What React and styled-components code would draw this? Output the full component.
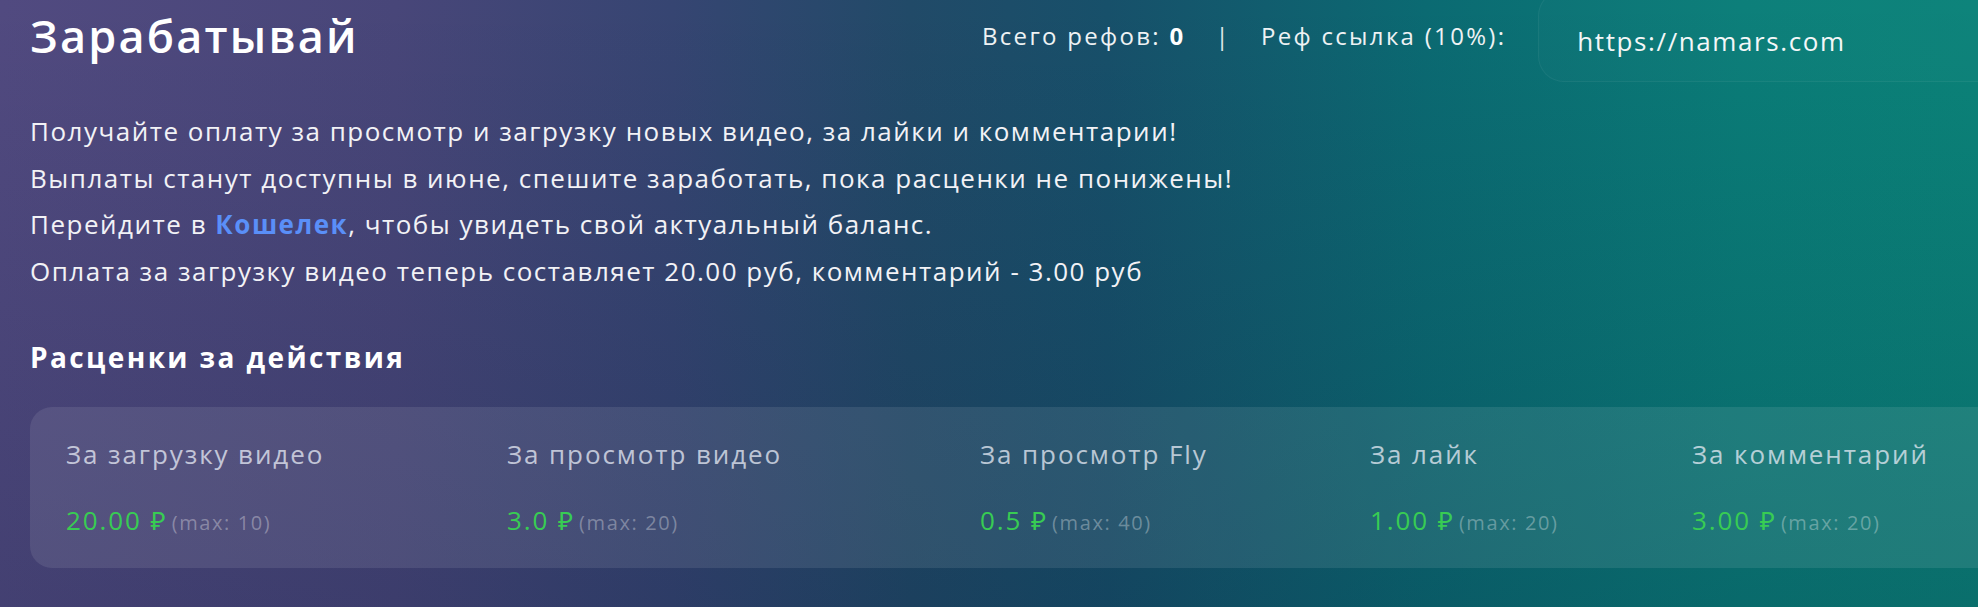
import React from "react";
import styled, { createGlobalStyle } from "styled-components";

const GlobalStyle = createGlobalStyle`
  html, body {
    margin: 0;
    padding: 0;
    height: 100%;
  }
  body {
    overflow: hidden;
    font-family: "Open Sans", "Noto Sans", sans-serif;
    color: #fff;
    background:
      linear-gradient(180deg, rgba(0, 0, 0, 0) 0%, rgba(4, 18, 48, 0.18) 100%),
      linear-gradient(90deg, #514a80 0%, #484679 20%, #364572 34%, #214a68 46%, #17506a 56%, #0b6a72 72%, #0a7d78 88%, #0b8379 100%);
  }
`;

const rates = [
  { title: "За загрузку видео", price: "20.00 ₽", max: 10 },
  { title: "За просмотр видео", price: "3.0 ₽", max: 20 },
  { title: "За просмотр Fly", price: "0.5 ₽", max: 40 },
  { title: "За лайк", price: "1.00 ₽", max: 20 },
  { title: "За комментарий", price: "3.00 ₽", max: 20 },
];

const App = () => {
  return (
    <>
      <GlobalStyle />
      <Page>
        <Header>
          <Title>Зарабатывай</Title>
          <RefBar>
            <Stat>
              Всего рефов: <b>0</b>
            </Stat>
            <Sep>|</Sep>
            <Stat>Реф ссылка (10%):</Stat>
            <LinkBox>https://namars.com</LinkBox>
          </RefBar>
        </Header>

        <Info>
          <Line>Получайте оплату за просмотр и загрузку новых видео, за лайки и комментарии!</Line>
          <Line>Выплаты станут доступны в июне, спешите заработать, пока расценки не понижены!</Line>
          <Line>
            Перейдите в <WalletLink href="#">Кошелек</WalletLink>, чтобы увидеть свой актуальный баланс.
          </Line>
          <Line>Оплата за загрузку видео теперь составляет 20.00 руб, комментарий - 3.00 руб</Line>
        </Info>

        <SectionTitle>Расценки за действия</SectionTitle>

        <RatesCard>
          {rates.map((r, idx) => (
            <RateItem key={idx}>
              <RateName>{r.title}</RateName>
              <RateValue>
                <Price>{r.price}</Price> <Max>(max: {r.max})</Max>
              </RateValue>
            </RateItem>
          ))}
        </RatesCard>
      </Page>
    </>
  );
};

export default App;

const Page = styled.div`
  width: 2060px;
  padding: 0 0 0 30px;
  box-sizing: border-box;
`;

const Header = styled.div`
  display: grid;
  grid-template-columns: 952px 1fr;
  align-items: center;
  height: 70px;
`;

const Title = styled.h1`
  margin: 0;
  font-size: 45px;
  font-weight: 600;
  letter-spacing: 2.2px;
  line-height: 1;
`;

const RefBar = styled.div`
  display: flex;
  align-items: center;
  height: 70px;
  font-size: 24px;
  letter-spacing: 2.3px;
  color: #eef2f4;
`;

const Stat = styled.span`
  white-space: nowrap;
  b {
    font-weight: 700;
    color: #fff;
  }
`;

const Sep = styled.span`
  margin: 0 30px;
  color: #dfe6ea;
`;

const LinkBox = styled.div`
  align-self: flex-start;
  margin-top: -10px;
  margin-left: 32px;
  height: 92px;
  flex: 1;
  display: flex;
  align-items: center;
  padding: 10px 0 0 38px;
  box-sizing: border-box;
  border-radius: 26px;
  border: 1px solid rgba(255, 255, 255, 0.05);
  background: rgba(255, 255, 255, 0.015);
  font-size: 26px;
  letter-spacing: 1.6px;
  color: #f4f7f8;
`;

const Info = styled.div`
  margin-top: 38px;
`;

const Line = styled.p`
  margin: 0;
  font-size: 26px;
  line-height: 46.7px;
  color: #f2f2f6;
  letter-spacing: 1.5px;
`;

const WalletLink = styled.a`
  color: #5a8ff8;
  font-weight: 700;
  text-decoration: none;
`;

const SectionTitle = styled.h2`
  margin: 45px 0 0;
  font-size: 28px;
  font-weight: 700;
  letter-spacing: 2.4px;
  line-height: 34px;
`;

const RatesCard = styled.div`
  margin-top: 33px;
  height: 161px;
  box-sizing: border-box;
  padding: 32px 0 0 36px;
  border-radius: 22px;
  background: rgba(255, 255, 255, 0.09);
  display: grid;
  grid-template-columns: 441px 473px 390px 322px auto;
`;

const RateItem = styled.div`
  display: flex;
  flex-direction: column;
  gap: 36px;
`;

const RateName = styled.div`
  font-size: 26px;
  font-weight: 500;
  letter-spacing: 1.9px;
  line-height: 30px;
  color: rgba(232, 236, 246, 0.76);
  white-space: nowrap;
`;

const RateValue = styled.div`
  line-height: 30px;
  white-space: nowrap;
`;

const Price = styled.span`
  font-size: 26px;
  letter-spacing: 1.9px;
  color: #38cc53;
`;

const Max = styled.span`
  font-size: 20px;
  letter-spacing: 1.6px;
  color: rgba(255, 255, 255, 0.32);
`;
